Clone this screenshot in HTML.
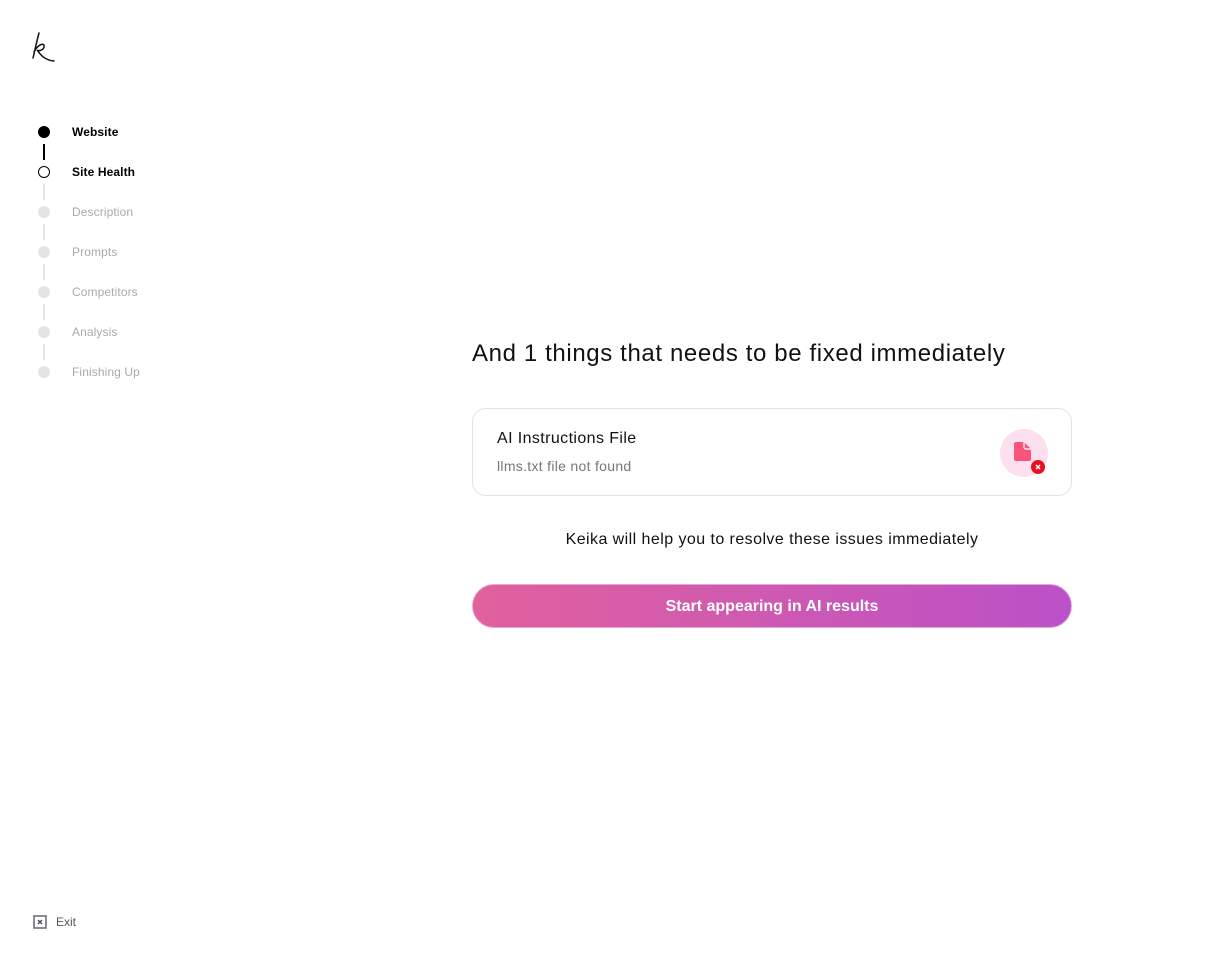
<!DOCTYPE html>
<html><head><meta charset="utf-8"><style>
*{margin:0;padding:0;box-sizing:border-box}
body{width:1224px;height:968px;background:#fff;font-family:"Liberation Sans",sans-serif;position:relative;overflow:hidden;color:#111}
.logo{position:absolute;left:30px;top:30px}
.step{position:absolute;left:72px;font-size:12px;line-height:14px;color:#aaa;letter-spacing:0.1px}
.dot{position:absolute;left:38px;width:12px;height:12px;border-radius:50%;background:#e5e5e5}
.ln{position:absolute;left:43px;width:2px;height:16px;background:#e5e5e5}
h1{position:absolute;left:472px;top:340px;font-size:24px;font-weight:400;color:#111;letter-spacing:0.62px;white-space:nowrap}
.card{position:absolute;left:472px;top:408px;width:600px;height:88px;border:1px solid #e3e3e3;border-radius:14px}
.card .t{position:absolute;left:24px;top:21px;font-size:16px;color:#111;letter-spacing:0.4px}
.card .s{position:absolute;left:24px;top:49px;font-size:14px;color:#777;letter-spacing:0.3px}
.ic{position:absolute;left:527px;top:20px;width:48px;height:48px;border-radius:50%;background:#fde0ee}
.help{position:absolute;left:472px;width:600px;top:531px;text-align:center;font-size:16px;letter-spacing:0.44px}
.btn{position:absolute;left:472px;top:584px;width:600px;height:44px;border-radius:22px;background:linear-gradient(90deg,#e1619c,#bb51c8);color:#fff;font-size:16px;font-weight:bold;text-align:center;line-height:43px;border:1px solid #e2a8d6}
.exit{position:absolute;left:56px;top:915px;font-size:12px;color:#555}
</style></head><body>
<svg class="logo" width="28" height="34" viewBox="0 0 28 34"><path d="M9 3 C7 10 5 20 3 28 M4 22 C8 14 15 12 14 17 C13 21 8 21 7 20 C10 24 14 30 24 31" fill="none" stroke="#111" stroke-width="1.5" stroke-linecap="round"/></svg>
<div class="dot" style="top:126px;background:#000"></div>
<div class="ln" style="top:144px;background:#000"></div>
<div class="dot" style="top:166px;background:#fff;border:1.5px solid #000"></div>
<div class="ln" style="top:184px"></div>
<div class="dot" style="top:206px"></div>
<div class="ln" style="top:224px"></div>
<div class="dot" style="top:246px"></div>
<div class="ln" style="top:264px"></div>
<div class="dot" style="top:286px"></div>
<div class="ln" style="top:304px"></div>
<div class="dot" style="top:326px"></div>
<div class="ln" style="top:344px"></div>
<div class="dot" style="top:366px"></div>
<div class="step" style="top:125px;color:#000;font-weight:bold">Website</div>
<div class="step" style="top:165px;color:#000;font-weight:bold">Site Health</div>
<div class="step" style="top:205px">Description</div>
<div class="step" style="top:245px">Prompts</div>
<div class="step" style="top:285px">Competitors</div>
<div class="step" style="top:325px">Analysis</div>
<div class="step" style="top:365px">Finishing Up</div>
<h1>And 1 things that needs to be fixed immediately</h1>
<div class="card"><div class="t">AI Instructions File</div><div class="s">llms.txt file not found</div>
<div class="ic"><svg width="48" height="48" viewBox="0 0 48 48" style="position:absolute;left:0;top:0"><path d="M16 13 h8 l7 7 v10 a2 2 0 0 1 -2 2 h-13 a2 2 0 0 1 -2 -2 v-15 a2 2 0 0 1 2 -2z" fill="#f7557a"/><path d="M24 13 v5 a2 2 0 0 0 2 2 h5" fill="none" stroke="#fff" stroke-width="1.2"/><circle cx="38" cy="38" r="7" fill="#e8101e"/><path d="M36 36 l4 4 M40 36 l-4 4" stroke="#fff" stroke-width="1.5"/></svg></div></div>
<div class="help">Keika will help you to resolve these issues immediately</div>
<div class="btn">Start appearing in AI results</div>
<svg style="position:absolute;left:33px;top:915px" width="14" height="14" viewBox="0 0 14 14"><rect x="1" y="1" width="12" height="12" fill="none" stroke="#667" stroke-width="1.5"/><path d="M5 5 l4 4 M9 5 l-4 4" stroke="#445" stroke-width="1.3"/></svg>
<div class="exit">Exit</div>
</body></html>
